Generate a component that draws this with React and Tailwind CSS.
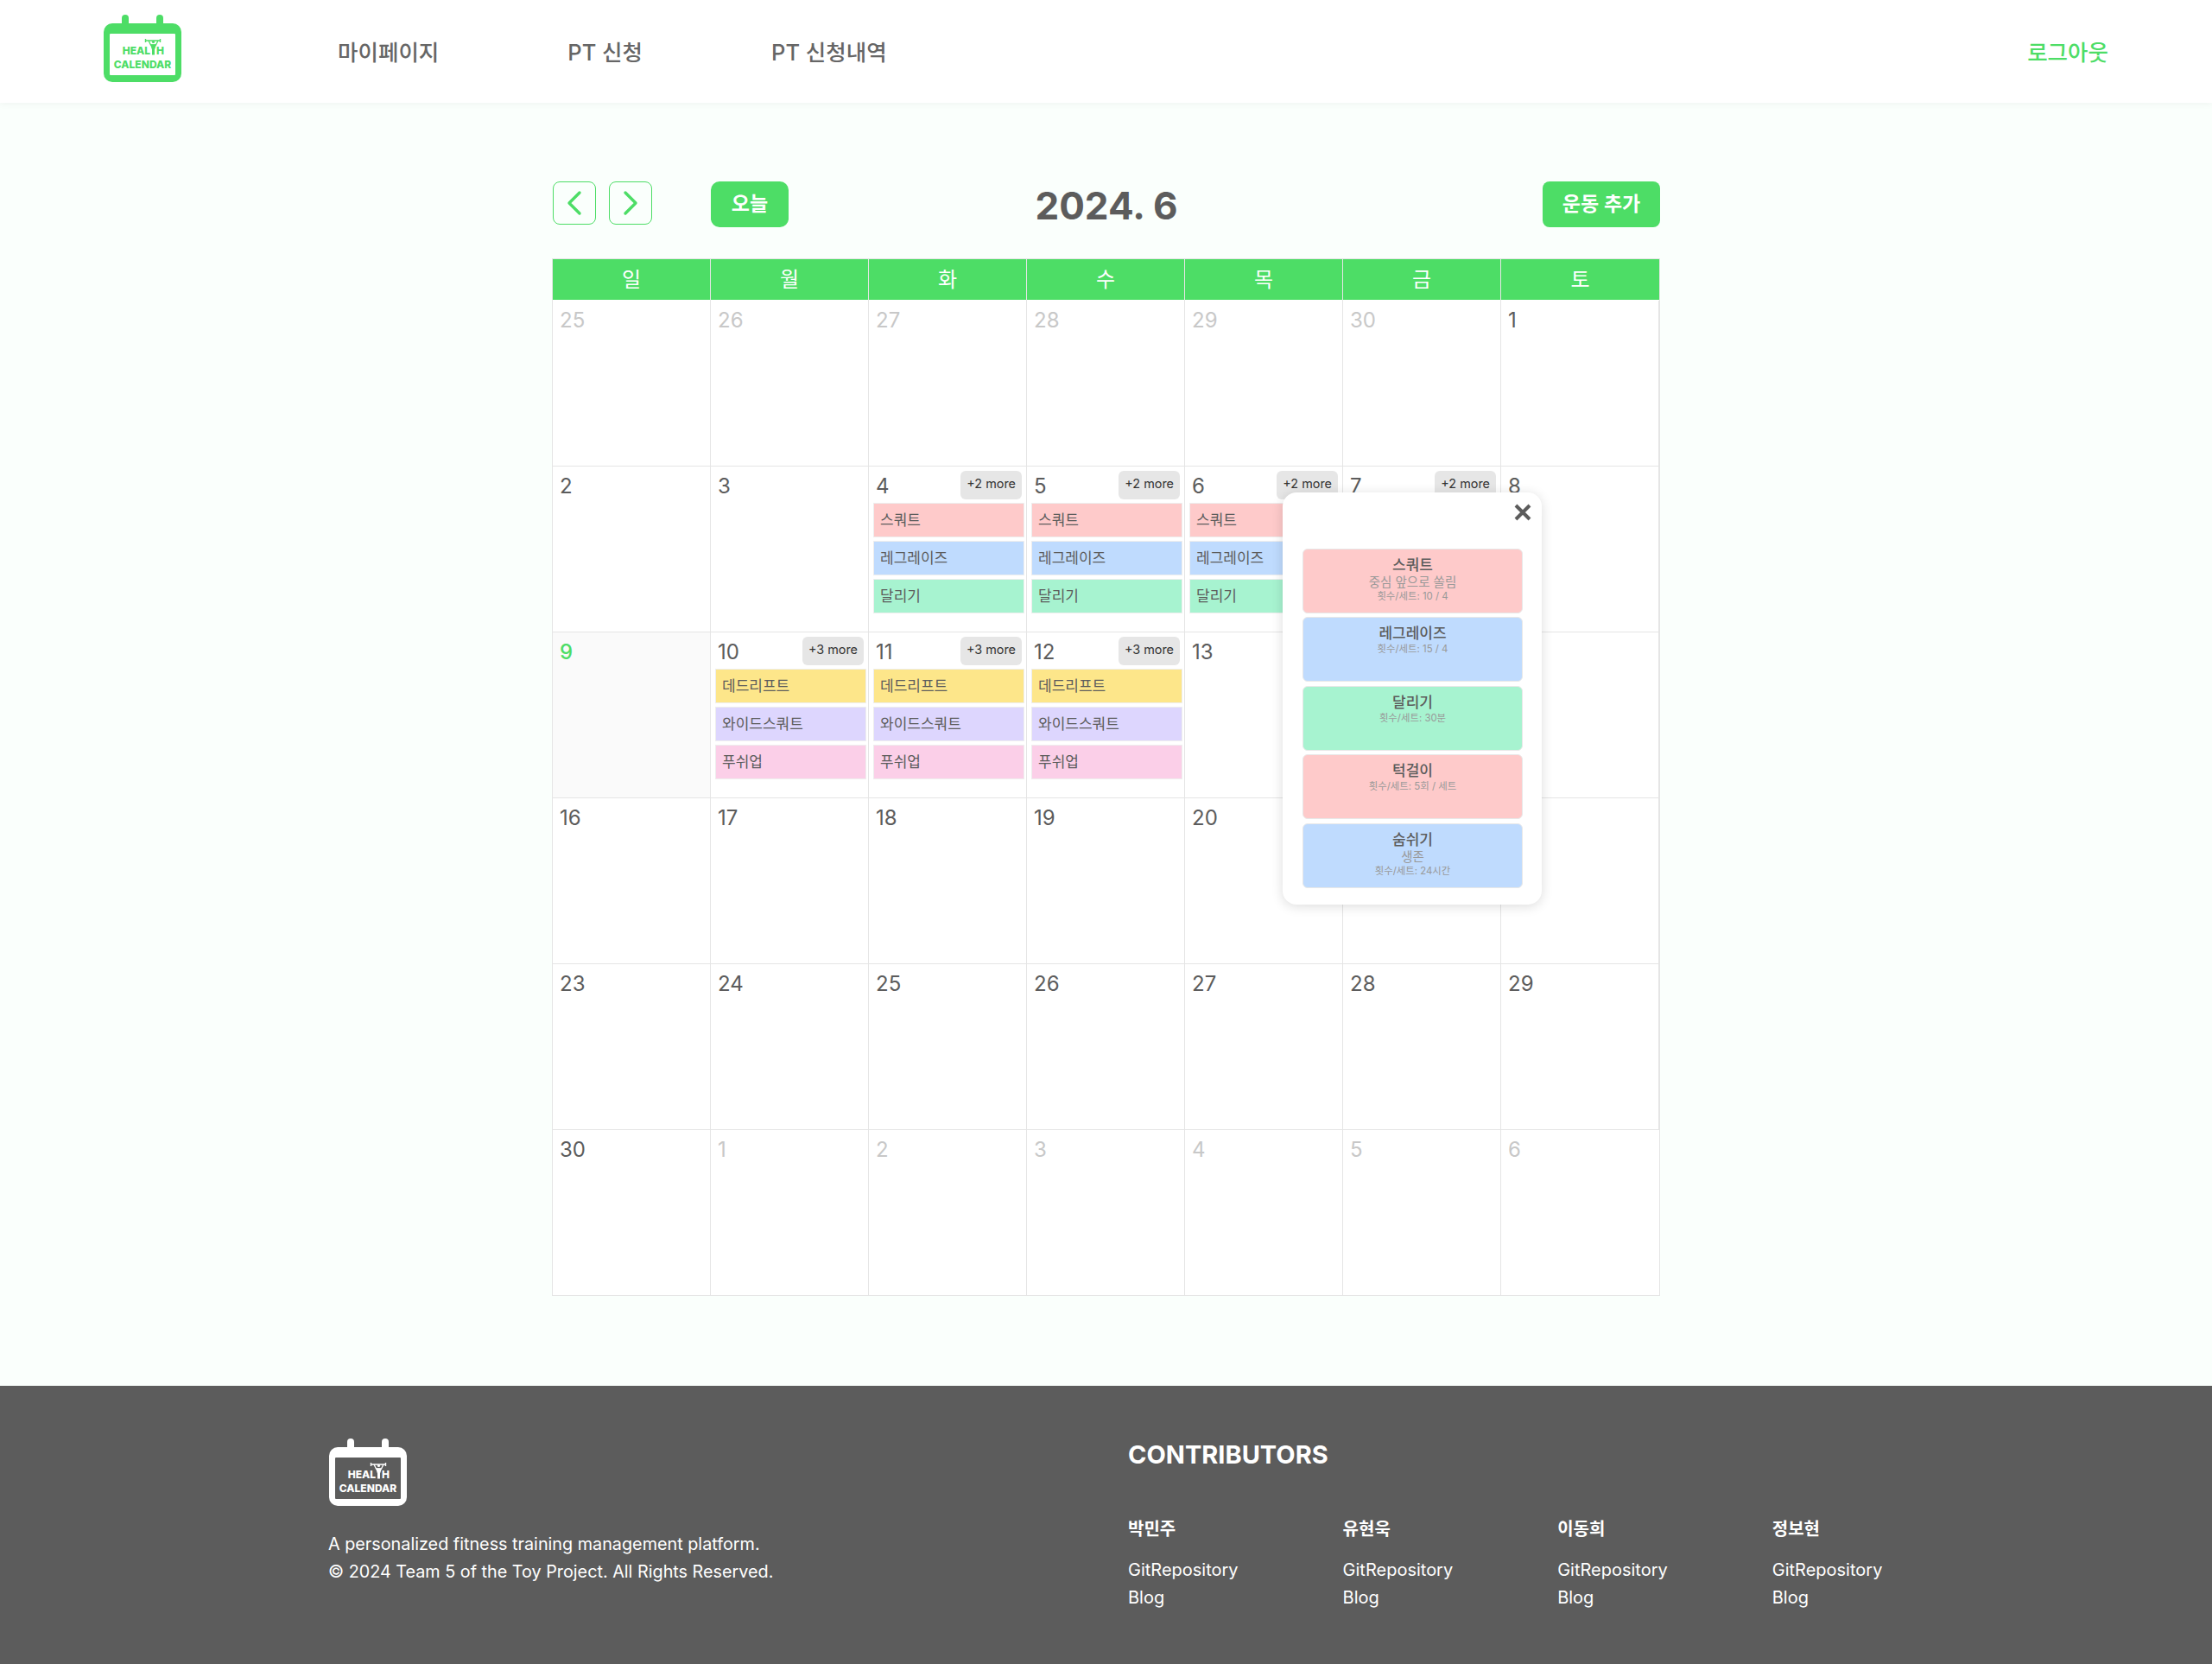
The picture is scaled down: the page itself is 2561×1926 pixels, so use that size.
import React from 'react';

const DAY_NAMES = ['일', '월', '화', '수', '목', '금', '토'];

const EX = {
  squat: { name: '스쿼트', color: 'bg-[#fecaca]' },
  raise: { name: '레그레이즈', color: 'bg-[#bfdbfe]' },
  run: { name: '달리기', color: 'bg-[#a7f3d0]' },
  dead: { name: '데드리프트', color: 'bg-[#fde68a]' },
  wide: { name: '와이드스쿼트', color: 'bg-[#ddd6fe]' },
  push: { name: '푸쉬업', color: 'bg-[#fbcfe8]' },
};

const weekA = { more: '+2 more', events: [EX.squat, EX.raise, EX.run] };
const weekB = { more: '+3 more', events: [EX.dead, EX.wide, EX.push] };

const cells = [
  { d: 25, off: true }, { d: 26, off: true }, { d: 27, off: true }, { d: 28, off: true }, { d: 29, off: true }, { d: 30, off: true }, { d: 1 },
  { d: 2 }, { d: 3 }, { d: 4, ...weekA }, { d: 5, ...weekA }, { d: 6, ...weekA }, { d: 7, ...weekA }, { d: 8 },
  { d: 9, today: true }, { d: 10, ...weekB }, { d: 11, ...weekB }, { d: 12, ...weekB }, { d: 13 }, { d: 14 }, { d: 15 },
  { d: 16 }, { d: 17 }, { d: 18 }, { d: 19 }, { d: 20 }, { d: 21 }, { d: 22 },
  { d: 23 }, { d: 24 }, { d: 25 }, { d: 26 }, { d: 27 }, { d: 28 }, { d: 29 },
  { d: 30 }, { d: 1, off: true }, { d: 2, off: true }, { d: 3, off: true }, { d: 4, off: true }, { d: 5, off: true }, { d: 6, off: true },
];

const popupItems = [
  { name: '스쿼트', note: '중심 앞으로 쏠림', reps: '횟수/세트: 10 / 4', color: 'bg-[#fecaca]' },
  { name: '레그레이즈', reps: '횟수/세트: 15 / 4', color: 'bg-[#bfdbfe]' },
  { name: '달리기', reps: '횟수/세트: 30분', color: 'bg-[#a7f3d0]' },
  { name: '턱걸이', reps: '횟수/세트: 5회 / 세트', color: 'bg-[#fecaca]' },
  { name: '숨쉬기', note: '생존', reps: '횟수/세트: 24시간', color: 'bg-[#bfdbfe]' },
];

const contributors = ['박민주', '유현욱', '이동희', '정보현'];

const Logo = ({ main, inner }) => (
  <svg width="92" height="79" viewBox="0 0 92 79" className="block">
    <rect x="22" y="0" width="8" height="18" rx="4" fill={main} />
    <rect x="62" y="0" width="8" height="18" rx="4" fill={main} />
    <rect x="1" y="10" width="90" height="68" rx="10" fill={main} />
    <rect x="8" y="22" width="76" height="48" rx="1" fill={inner} />
    <text x="55" y="46" textAnchor="end" fontSize="12" fontWeight="800" fill={main} fontFamily="Inter, sans-serif">HEAL</text>
    <text x="62" y="46" fontSize="12" fontWeight="800" fill={main} fontFamily="Inter, sans-serif">H</text>
    <text x="46" y="62" textAnchor="middle" fontSize="12" fontWeight="800" fill={main} fontFamily="Inter, sans-serif">CALENDAR</text>
    <path d="M49 30h18M49.5 28v4M66.5 28v4" stroke={main} strokeWidth="1.4" fill="none" />
    <circle cx="58.5" cy="31.5" r="1.6" fill={main} />
    <path d="M53 30l2.5 5h6l2.5-5" stroke={main} strokeWidth="1.3" fill="none" />
    <path d="M55 34.5h7l-2 6v6h-3v-6z" fill={main} />
  </svg>
);

const Chevron = ({ d }) => (
  <svg width="18" height="30" viewBox="0 0 18 30" fill="none" stroke="#4ddd66" strokeWidth="3.4" strokeLinecap="round" strokeLinejoin="round">
    <path d={d} />
  </svg>
);

const DayCell = ({ cell }) => (
  <div className={`h-[192px] border-r border-b border-[#e5e5e5] last:border-r-0 ${cell.today ? 'bg-[#fafafa]' : 'bg-white'}`}>
    <div className="flex items-start justify-between h-[42px] pl-2 pr-[5px]">
      <span className={`mt-[7px] text-2xl leading-8 ${cell.off ? 'text-[#c8c8c8]' : cell.today ? 'text-[#4ddd66] font-medium' : 'text-[#5c5c5c]'}`}>
        {cell.d}
      </span>
      {cell.more && (
        <span className="mt-[5px] h-[33px] px-[7px] rounded-md bg-[#e6e6e6] text-[#333] text-[14.4px] leading-[30px]">{cell.more}</span>
      )}
    </div>
    {cell.events && (
      <div className="flex flex-col gap-1 ml-[5px] mr-[2px]">
        {cell.events.map((ev) => (
          <div key={ev.name} className={`h-10 px-[7px] border border-[#eeeeee] text-[17px] leading-[39px] text-[#5c5c5c] ${ev.color}`}>
            {ev.name}
          </div>
        ))}
      </div>
    )}
  </div>
);

const DayPopup = () => (
  <div className="absolute left-[846px] top-[360px] w-[300px] h-[477px] bg-white rounded-2xl shadow-[0_2px_14px_rgba(0,0,0,0.14)] pl-[23px] pr-[22px]">
    <div className="flex justify-end h-[65px] pt-[13px] -mr-[10px]">
      <svg width="20" height="20" viewBox="0 0 20 20" stroke="#5c5c5c" strokeWidth="4" fill="none">
        <path d="M2 2l16 16M18 2L2 18" />
      </svg>
    </div>
    <div className="flex flex-col gap-[4.4px]">
      {popupItems.map((item) => (
        <div key={item.name} className={`h-[75px] pt-[7px] border border-[#e8e8e8] rounded-md text-center ${item.color}`}>
          <div className="text-[17px] leading-[22px] font-medium text-[#5c5c5c]">{item.name}</div>
          {item.note && <div className="text-[14.5px] leading-[18px] text-[#999]">{item.note}</div>}
          <div className="text-[11.4px] leading-[14px] text-[#999]">{item.reps}</div>
        </div>
      ))}
    </div>
  </div>
);

const App = () => (
  <div className="min-h-screen flex flex-col bg-[#fafffc] font-['Inter','Noto_Sans_CJK_KR',sans-serif]">
    <nav className="relative z-10 h-[119px] shrink-0 flex items-center bg-white pl-[119px] pr-[120px] shadow-[0_2px_8px_rgba(0,0,0,0.04)]">
      <div className="-mt-[6px]">
        <Logo main="#4ddd66" inner="#ffffff" />
      </div>
      <div className="ml-[180px] flex gap-[149px] text-[25.5px] leading-[40px] mt-[2px] font-medium text-[#666]">
        <span>마이페이지</span>
        <span>PT 신청</span>
        <span>PT 신청내역</span>
      </div>
      <span className="ml-auto text-[25.5px] leading-[40px] mt-[2px] font-medium text-[#4ddd66]">로그아웃</span>
    </nav>

    <main className="flex-1 pt-[91px] pb-[104px]">
      <div className="relative w-[1283px] mx-auto">
        <div className="grid grid-cols-[1fr_auto_1fr] h-[53px] mb-[36px] pl-px">
          <div className="flex items-start">
            <button className="w-[50px] h-[50px] flex items-center justify-center rounded-lg border border-[#4ddd66]">
              <Chevron d="M15 3L3 15l12 12" />
            </button>
            <button className="ml-[15px] w-[50px] h-[50px] flex items-center justify-center rounded-lg border border-[#4ddd66]">
              <Chevron d="M3 3l12 12L3 27" />
            </button>
            <button className="ml-[68px] w-[90px] h-[53px] rounded-[10px] bg-[#4ddd66] text-white text-[23px] font-semibold">오늘</button>
          </div>
          <h1 className="text-[44px] leading-[56px] font-bold text-[#5c5c5c]">2024. 6</h1>
          <div className="flex justify-end">
            <button className="w-[136px] h-[53px] rounded-lg bg-[#4ddd66] text-white text-[23px] font-semibold">운동 추가</button>
          </div>
        </div>

        <div className="grid grid-cols-[repeat(6,183px)_1fr] h-[48px] bg-[#4ddd66] border border-b-0 border-[#e5e5e5]">
          {DAY_NAMES.map((name) => (
            <div key={name} className="text-center text-2xl leading-[48px] text-white border-r border-[#e5e5e5] last:border-r-0">
              {name}
            </div>
          ))}
        </div>
        <div className="grid grid-cols-[repeat(6,183px)_1fr] pt-px bg-white border-l border-r border-[#e5e5e5]">
          {cells.map((cell, i) => (
            <DayCell key={i} cell={cell} />
          ))}
        </div>
        <DayPopup />
      </div>
    </main>

    <footer className="h-[322px] shrink-0 flex bg-[#5c5c5c] text-white pl-[380px]">
      <div className="w-[926px] pt-[61px]">
        <Logo main="#ffffff" inner="#5c5c5c" />
        <p className="mt-[27px] text-[19.8px] leading-8">A personalized fitness training management platform.</p>
        <p className="text-[19.8px] leading-8">© 2024 Team 5 of the Toy Project. All Rights Reserved.</p>
      </div>
      <div className="pt-[58px]">
        <h2 className="text-[29px] leading-[44px] font-bold">CONTRIBUTORS</h2>
        <div className="mt-[48px] flex">
          {contributors.map((name) => (
            <div key={name} className="w-[248.6px]">
              <h3 className="text-xl leading-8 font-bold">{name}</h3>
              <p className="mt-[15px] text-xl leading-8">GitRepository</p>
              <p className="text-xl leading-8">Blog</p>
            </div>
          ))}
        </div>
      </div>
    </footer>
  </div>
);

export default App;
